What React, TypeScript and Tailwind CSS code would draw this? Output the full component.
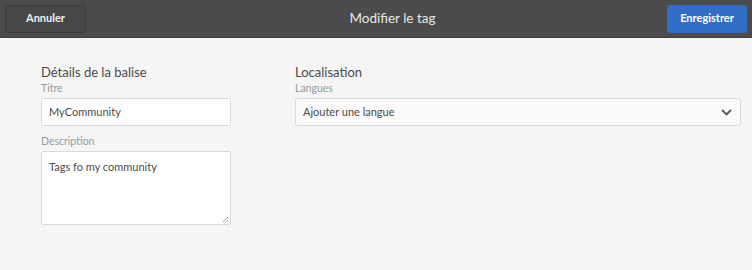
import React from "react";

export default function App() {
  return (
    <div className="w-[752px] h-[270px] bg-[#f5f5f5] overflow-hidden" style={{ fontFamily: "Lato, 'Open Sans', sans-serif" }}>
      <div className="h-[38px] bg-[#4b4b4b] border-b border-[#3f3f3f] flex items-center px-[5px]">
        <button className="w-[81px] h-[28px] rounded-[3px] bg-[#474747] border border-[#3c3c3c] text-[#f0f0f0] text-[11px] font-bold">
          Annuler
        </button>
        <div className="flex-1 text-center pl-[32px] text-[#e8e8e8] text-[13.5px]">Modifier le tag</div>
        <button className="w-[80px] h-[28px] rounded-[3px] bg-[#326ec8] text-white text-[11px] font-bold">
          Enregistrer
        </button>
      </div>
      <div className="flex pl-[41px] pr-[11px] pt-[25px] gap-[64px]">
        <div className="w-[190px] flex flex-col">
          <div className="text-[13px] text-[#4b4b4b] leading-[18px]">Détails de la balise</div>
          <div className="text-[10.5px] text-[#999] leading-[14px]">Titre</div>
          <div className="mt-[3px] h-[28px] bg-white border border-[#dadada] rounded-[2px] flex items-center px-[7px] text-[11px] text-[#4b4b4b]">
            MyCommunity
          </div>
          <div className="text-[10.5px] text-[#999] mt-[8px] leading-[14px]">Description</div>
          <div className="mt-[3px] h-[74px] bg-white border border-[#dadada] rounded-[2px] px-[7px] pt-[7px] text-[11px] text-[#4b4b4b] relative">
            Tags fo my community
            <svg className="absolute right-[1px] bottom-[1px]" width="8" height="8" viewBox="0 0 8 8">
              <path d="M7 2 L2 7 M7 5 L5 7" stroke="#999" strokeWidth="1" />
            </svg>
          </div>
        </div>
        <div className="flex-1 flex flex-col">
          <div className="text-[13px] text-[#4b4b4b] leading-[18px]">Localisation</div>
          <div className="text-[10.5px] text-[#999] leading-[14px]">Langues</div>
          <div className="mt-[3px] h-[28px] bg-[#fafafa] border border-[#dadada] rounded-[3px] flex items-center justify-between pl-[7px] pr-[8px] text-[11px] text-[#4b4b4b]">
            <span>Ajouter une langue</span>
            <svg width="11" height="7" viewBox="0 0 11 7">
              <path d="M1 1 L5.5 5.5 L10 1" stroke="#555" strokeWidth="1.8" fill="none" />
            </svg>
          </div>
        </div>
      </div>
    </div>
  );
}
